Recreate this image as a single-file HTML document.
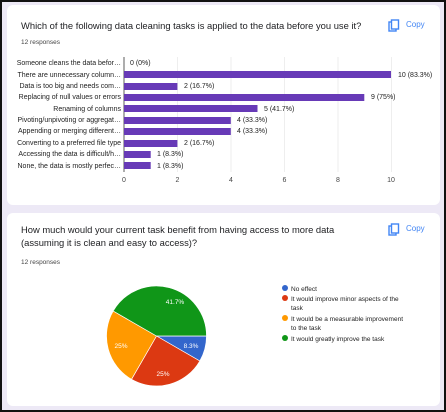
<!DOCTYPE html>
<html><head><style>
body{margin:0;width:446px;height:412px;overflow:hidden;font-family:"Liberation Sans",Arial,sans-serif;}
.outer{position:absolute;left:0;top:0;width:442px;height:408px;border:2px solid #111;background:#ede9f6;}
.card{position:absolute;left:5px;width:433px;background:#fff;border-radius:6px;}
.t{position:absolute;left:14px;font-size:9.4px;color:#202124;line-height:13px;}
.r{position:absolute;left:14px;font-size:6.5px;color:#444;}
.copy{position:absolute;font-size:8px;color:#4285f4;}
svg text{font-family:"Liberation Sans",Arial,sans-serif;}
</style></head><body>
<div class="outer">
<div class="card" style="top:3px;height:200px">
 <div class="t" style="top:14px">Which of the following data cleaning tasks is applied to the data before you use it?</div>
 <div class="r" style="top:34px">12 responses</div>
 <svg style="position:absolute;left:381px;top:14px" width="12" height="13" viewBox="0 0 12 13"><rect x="1" y="3" width="7" height="9" fill="none" stroke="#4285f4" stroke-width="1.4"/><rect x="3.5" y="1" width="7" height="9" fill="#fff" stroke="#4285f4" stroke-width="1.4"/></svg>
 <div class="copy" style="top:15px;left:399px">Copy</div>
</div>
<div class="card" style="top:211px;height:193px">
 <div class="t" style="top:10px">How much would your current task benefit from having access to more data<br>(assuming it is clean and easy to access)?</div>
 <div class="r" style="top:46px">12 responses</div>
 <svg style="position:absolute;left:381px;top:10px" width="12" height="13" viewBox="0 0 12 13"><rect x="1" y="3" width="7" height="9" fill="none" stroke="#4285f4" stroke-width="1.4"/><rect x="3.5" y="1" width="7" height="9" fill="#fff" stroke="#4285f4" stroke-width="1.4"/></svg>
 <div class="copy" style="top:11px;left:399px">Copy</div>
</div>
</div>
<svg style="position:absolute;left:0;top:0" width="446" height="412">
 <g stroke="#eee" stroke-width="1">
  <line x1="177.5" y1="57" x2="177.5" y2="172"/><line x1="231" y1="57" x2="231" y2="172"/><line x1="284.5" y1="57" x2="284.5" y2="172"/><line x1="338" y1="57" x2="338" y2="172"/><line x1="391.5" y1="57" x2="391.5" y2="172"/>
 </g>
 <line x1="124" y1="57" x2="124" y2="172" stroke="#333" stroke-width="0.8"/>
 <g font-size="7" fill="#222" text-anchor="end">
  <text x="121" y="65">Someone cleans the data befor…</text>
  <text x="121" y="77">There are unnecessary column…</text>
  <text x="121" y="88">Data is too big and needs com…</text>
  <text x="121" y="99">Replacing of null values or errors</text>
  <text x="121" y="111">Renaming of columns</text>
  <text x="121" y="122">Pivoting/unpivoting or aggregat…</text>
  <text x="121" y="133">Appending or merging different…</text>
  <text x="121" y="145">Converting to a preferred file type</text>
  <text x="121" y="156">Accessing the data is difficult/h…</text>
  <text x="121" y="168">None, the data is mostly perfec…</text>
 </g>
 <g fill="#673ab7">
  <rect x="124" y="71" width="267" height="7"/>
  <rect x="124" y="83" width="53.4" height="7"/>
  <rect x="124" y="94" width="240.3" height="7"/>
  <rect x="124" y="105" width="133.5" height="7"/>
  <rect x="124" y="117" width="106.8" height="7"/>
  <rect x="124" y="128" width="106.8" height="7"/>
  <rect x="124" y="140" width="53.4" height="7"/>
  <rect x="124" y="151" width="26.7" height="7"/>
  <rect x="124" y="162" width="26.7" height="7"/>
 </g>
 <g font-size="7" fill="#222">
  <text x="130" y="65">0 (0%)</text>
  <text x="398" y="77">10 (83.3%)</text>
  <text x="184" y="88">2 (16.7%)</text>
  <text x="371" y="99">9 (75%)</text>
  <text x="264" y="111">5 (41.7%)</text>
  <text x="237" y="122">4 (33.3%)</text>
  <text x="237" y="133">4 (33.3%)</text>
  <text x="184" y="145">2 (16.7%)</text>
  <text x="157" y="156">1 (8.3%)</text>
  <text x="157" y="168">1 (8.3%)</text>
 </g>
 <g font-size="7" fill="#444" text-anchor="middle">
  <text x="124" y="182">0</text><text x="177.5" y="182">2</text><text x="231" y="182">4</text><text x="284.5" y="182">6</text><text x="338" y="182">8</text><text x="391" y="182">10</text>
 </g>
 <g stroke="#fff" stroke-width="0.7">
  <path d="M156.5 336 L206.5 336 A50 50 0 0 1 199.8 361 Z" fill="#3366cc"/>
  <path d="M156.5 336 L199.8 361 A50 50 0 0 1 131.5 379.3 Z" fill="#dc3912"/>
  <path d="M156.5 336 L131.5 379.3 A50 50 0 0 1 113.2 311 Z" fill="#ff9900"/>
  <path d="M156.5 336 L113.2 311 A50 50 0 0 1 206.5 336 Z" fill="#109618"/>
 </g>
 <g font-size="6.5" fill="#fff" text-anchor="middle">
  <text x="175" y="304">41.7%</text><text x="121" y="348">25%</text><text x="163" y="376">25%</text><text x="191" y="348">8.3%</text>
 </g>
 <g font-size="6.5" fill="#222">
  <circle cx="285" cy="288" r="3" fill="#3366cc"/><text x="291" y="291">No effect</text>
  <circle cx="285" cy="298" r="3" fill="#dc3912"/><text x="291" y="301">It would improve minor aspects of the</text><text x="291" y="310">task</text>
  <circle cx="285" cy="318" r="3" fill="#ff9900"/><text x="291" y="321">It would be a measurable improvement</text><text x="291" y="330">to the task</text>
  <circle cx="285" cy="338" r="3" fill="#109618"/><text x="291" y="341">It would greatly improve the task</text>
 </g>
</svg>
</body></html>
